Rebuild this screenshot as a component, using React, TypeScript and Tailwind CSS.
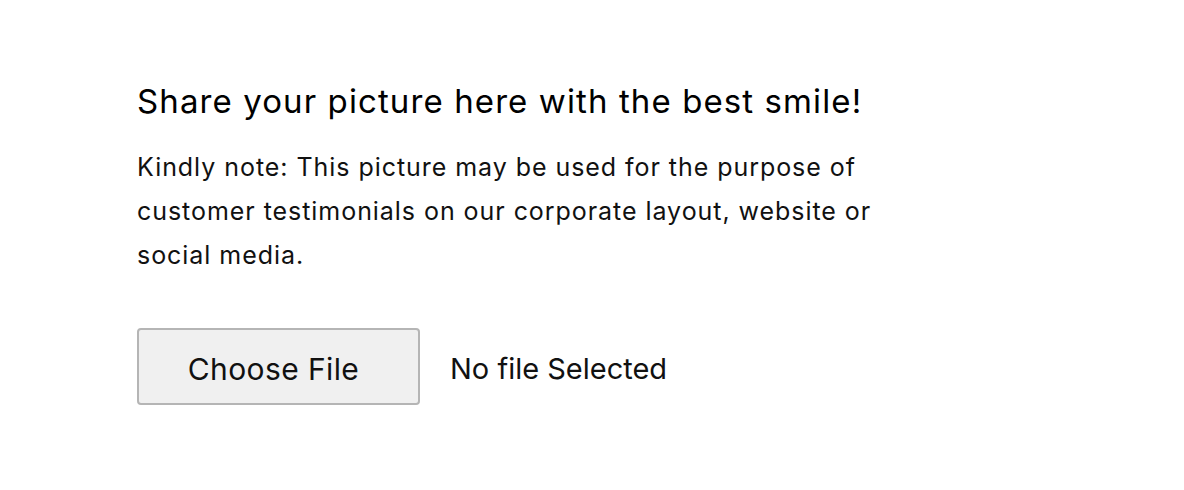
export default function App() {
  return (
    <main
      className="min-h-screen bg-white text-black"
      style={{ fontFamily: "Inter, 'Open Sans', sans-serif" }}
    >
      <div className="pl-[137px] pt-[79px]">
        <h1 className="text-[33px] leading-[44px] font-normal tracking-[1.1px]">
          Share your picture here with the best smile!
        </h1>
        <p className="mt-[22px] w-[800px] text-[25px] leading-[44px] tracking-[0.95px] text-[#111]">
          Kindly note: This picture may be used for the purpose of customer
          testimonials on our corporate layout, website or social media.
        </p>
        <div className="mt-[51px] flex items-center gap-[30px]">
          <button className="w-[283px] h-[77px] rounded-[4px] border-2 border-[#b5b5b5] bg-[#f0f0f0] pr-[10px] pt-[5px] text-[30px] tracking-[0.4px] text-[#111]">
            Choose File
          </button>
          <span className="pt-[5px] text-[29px] text-[#111]">No file Selected</span>
        </div>
      </div>
    </main>
  );
}
